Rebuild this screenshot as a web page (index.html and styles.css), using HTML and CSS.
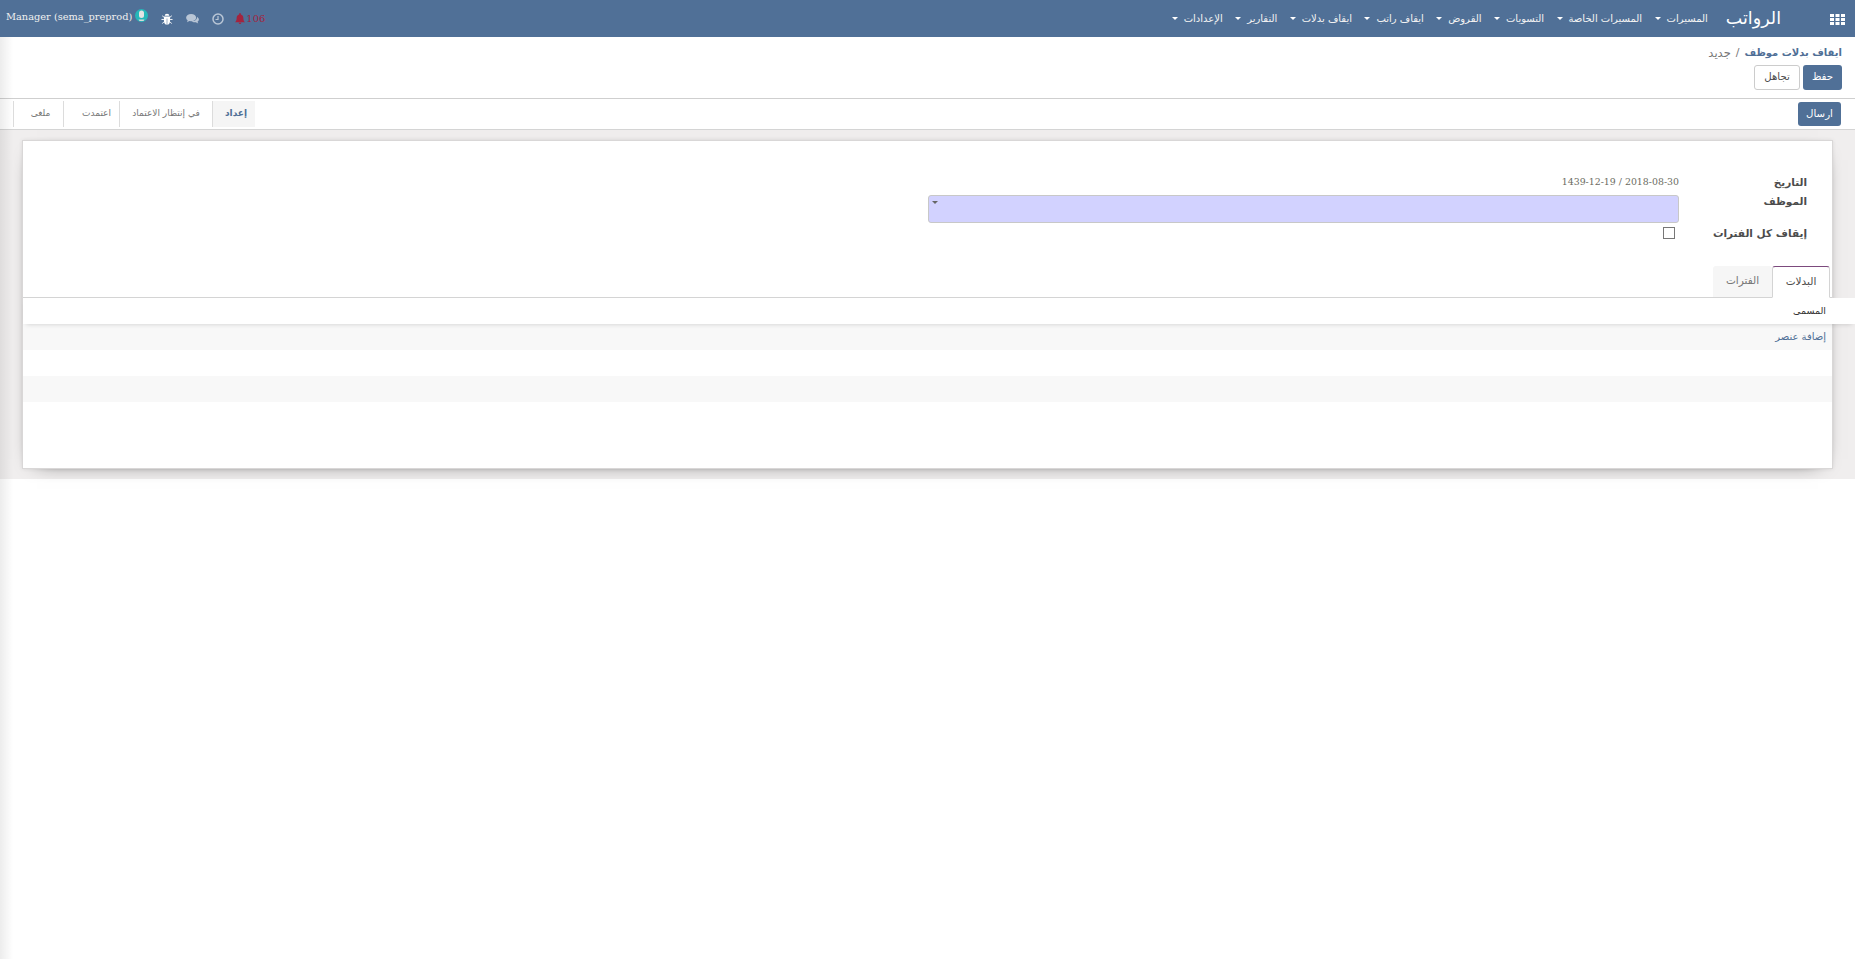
FILE: index.html
```html
<!DOCTYPE html>
<html lang="ar" dir="rtl">
<head>
<meta charset="utf-8">
<title>ايقاف بدلات موظف</title>
<link rel="stylesheet" href="styles.css">
</head>
<body>
<div class="edge-shade"></div>
<header class="navbar">
  <div class="nav-main">
    <svg class="apps" viewBox="0 0 15 11"><g fill="#fff"><rect x="0" y="0" width="4" height="3"/><rect x="5.500" y="0" width="4" height="3"/><rect x="11" y="0" width="4" height="3"/><rect x="0" y="4" width="4" height="3"/><rect x="5.500" y="4" width="4" height="3"/><rect x="11" y="4" width="4" height="3"/><rect x="0" y="8" width="4" height="3"/><rect x="5.500" y="8" width="4" height="3"/><rect x="11" y="8" width="4" height="3"/></g></svg>
    <span class="brand">الرواتب</span>
    <nav class="menu">
      <a class="menu-item">المسيرات<i class="caret"></i></a>
      <a class="menu-item">المسيرات الخاصة<i class="caret"></i></a>
      <a class="menu-item">التسويات<i class="caret"></i></a>
      <a class="menu-item">القروض<i class="caret"></i></a>
      <a class="menu-item">ايقاف راتب<i class="caret"></i></a>
      <a class="menu-item">ايقاف بدلات<i class="caret"></i></a>
      <a class="menu-item">التقارير<i class="caret"></i></a>
      <a class="menu-item">الإعدادات<i class="caret"></i></a>
    </nav>
  </div>
  <div class="nav-tools">
    <span class="alerts">106<svg class="ico-bell" viewBox="0 0 12 13"><path fill="#a3243f" d="M6 0a1 1 0 0 1 1 1v.6c2 .4 3 2 3 4 0 3 .6 4 2 5.400H0c1.400-1.400 2-2.400 2-5.400 0-2 1-3.600 3-4V1a1 1 0 0 1 1-1zM4.500 11.500h3a1.500 1.500 0 0 1-3 0z"/></svg></span>
    <svg class="ico-clock" viewBox="0 0 12 12"><circle cx="6" cy="6" r="5" fill="none" stroke="#b9c6d6" stroke-width="1.500"/><path d="M6 3v3.500H3.500" fill="none" stroke="#b9c6d6" stroke-width="1.200"/></svg>
    <svg class="ico-chat" viewBox="0 0 14 11"><g fill="#b9c6d6"><ellipse cx="5.500" cy="4" rx="5.500" ry="4"/><path d="M2 6l-1 3 4-2z"/><path d="M12 3.200c1.300.7 2 1.700 2 2.800 0 1-.6 1.900-1.500 2.500l.8 2-2.700-1.500c-2 .3-3.700-.2-4.600-1 3.300 0 6.200-2 6-4.800z"/></g></svg>
    <svg class="ico-bug" viewBox="0 0 12 13"><g fill="#fff"><path d="M3.500 3a2.500 2.200 0 0 1 5 0z"/><path d="M2.700 3.700h6.600V9c0 2-1.400 3.600-3 3.800V6H5.700v6.800c-1.600-.2-3-1.800-3-3.800z"/></g><g stroke="#fff" stroke-width="1" fill="none"><path d="M2.700 4.500L.8 3M9.300 4.500L11.200 3M2.700 7H0M9.300 7H12M2.700 9.500L1 11.500M9.300 9.500L11 11.500"/></g></svg>
    <svg class="ico-mic" viewBox="0 0 13 13"><circle cx="6.500" cy="6.500" r="6.500" fill="#26b7b9"/><rect x="4" y="1.500" width="5" height="7.500" rx="2.500" fill="#e4e4e4"/><path d="M3.500 10.500h6l-1 1.500h-4z" fill="#d8d8d8"/></svg>
    <span class="user">Manager (sema_preprod)</span>
  </div>
</header>

<section class="control-panel">
  <div class="breadcrumb"><a class="crumb-link">ايقاف بدلات موظف</a><span class="crumb-sep">/</span><span class="crumb-cur">جديد</span></div>
  <div class="cp-buttons">
    <button class="btn btn-primary btn-save">حفظ</button>
    <button class="btn btn-default">تجاهل</button>
  </div>
</section>

<section class="statusbar">
  <button class="btn btn-primary btn-send">ارسال</button>
  <div class="states">
    <span class="state state-active">إعداد</span>
    <span class="state state-wait">في إنتظار الاعتماد</span>
    <span class="state state-appr">اعتمدت</span>
    <span class="state state-canc">ملغى</span>
  </div>
</section>

<main class="content">
  <div class="sheet">
    <div class="fields">
      <div class="field field-date"><label class="lbl">التاريخ</label><span class="val">2018-08-30 / 1439-12-19</span></div>
      <div class="field field-emp"><label class="lbl">الموظف</label><div class="select"><i class="select-caret"></i></div></div>
      <div class="field field-all"><label class="lbl">إيقاف كل الفترات</label><span class="check"></span></div>
    </div>
    <div class="tabs">
      <a class="tab tab-active">البدلات</a>
      <a class="tab tab-off">الفترات</a>
    </div>
    <div class="thead">المسمى</div>
    <div class="row row-alt"><a class="add-link">إضافة عنصر</a></div>
    <div class="row"></div>
    <div class="row row-alt"></div>
    <div class="row-tail"></div>
  </div>
</main>
</body>
</html>
```
FILE: styles.css
```css
* { box-sizing: border-box; }
html, body { margin: 0; padding: 0; height: 100%; }
body {
  font-family: "DejaVu Serif", "DejaVu Sans", serif;
  font-size: 11px;
  line-height: 1.4;
  color: #4c4c4c;
  background: #fff;
  position: relative;
  overflow: hidden;
}
.edge-shade {
  position: absolute;
  left: 0; top: 37px; bottom: 0;
  width: 13px;
  background: linear-gradient(to right, rgba(0,0,0,.075), rgba(0,0,0,0));
  z-index: 5;
  pointer-events: none;
}
.navbar {
  height: 37px;
  background: #507097;
  color: #fff;
  display: flex;
  justify-content: space-between;
  align-items: center;
}
.nav-main { display: flex; align-items: center; padding-right: 10px; }
.apps { width: 15px; height: 11px; display: block; margin-top: 1px; }
.brand { font-family: "DejaVu Sans", sans-serif; font-size: 17.500px; line-height: 24px; margin-right: 49px; margin-left: 18px; position: relative; top: -1px; }
.menu { display: flex; }
.menu-item { font-family: "DejaVu Sans", sans-serif; font-size: 10px; display: flex; align-items: center; margin-left: 12.400px; color: #f2f2f2; }
.caret { width: 0; height: 0; border-top: 3px solid #fff; border-left: 3px solid transparent; border-right: 3px solid transparent; margin-right: 6px; }
.nav-tools { display: flex; align-items: center; padding-left: 6px; }
.alerts { color: #a3243f; display: flex; align-items: center; font-size: 10px; margin-left: 11px; }
.ico-bell { width: 10px; height: 11px; margin-right: 1px; }
.ico-clock { width: 12px; height: 12px; margin-left: 13px; }
.ico-chat { width: 13px; height: 10px; margin-left: 13px; }
.ico-bug { width: 12px; height: 12px; margin-left: 13px; }
.ico-mic { width: 13px; height: 13px; margin-left: 3px; margin-top: -6px; }
.user { color: #f0f0f0; font-size: 9.800px; margin-top: -3px; }

.control-panel { height: 62px; padding: 7px 13px 0; border-bottom: 1px solid #cfcfcf; }
.breadcrumb { display: flex; align-items: center; height: 18px; font-family: "DejaVu Sans", sans-serif; font-size: 10px; }
.crumb-link { font-weight: bold; color: #4f6f96; }
.crumb-sep { margin: 0 5px; color: #777; font-size: 11px; }
.crumb-cur { color: #777; font-size: 11.500px; }
.cp-buttons { display: flex; gap: 3px; margin-top: 3px; }
.btn { font-family: "DejaVu Sans", sans-serif; font-size: 10.200px; border-radius: 3px; border: 1px solid transparent; height: 25px; padding: 0; line-height: 1; }
.btn-primary { background: #507097; color: #fff; }
.btn-default { background: #fff; border-color: #ccc; color: #4c4c4c; width: 46px; }
.btn-save { width: 39px; }

.statusbar { height: 31px; padding: 3px 14px 0 13px; display: flex; justify-content: space-between; border-bottom: 1px solid #d4d4d4; }
.btn-send { width: 43px; height: 24px; }
.states { display: flex; height: 26px; margin-top: -1px; font-family: "DejaVu Sans", sans-serif; font-size: 9px; }
.state { display: flex; align-items: center; justify-content: center; border-left: 1px solid #dcdcdc; color: #777; padding-bottom: 1px; }
.state-active { width: 43px; background: #f5f5f5; font-weight: bold; color: #4f6f96; padding-left: 4px; }
.state-wait { width: 93px; }
.state-appr { width: 56px; padding-left: 10px; }
.state-canc { width: 50px; padding-left: 4px; }

.content { background: #f0eeee; height: 349px; padding: 10px 22px 10px 22px; }
.sheet { background: #fff; border: 1px solid #d9d7d7; height: 329px; box-shadow: 0 5px 20px -15px #000, 0 0 4px rgba(0,0,0,.08); }
.fields { height: 125px; padding-top: 32px; }
.field { display: flex; }
.lbl { font-family: "DejaVu Sans", sans-serif; font-size: 10.500px; font-weight: bold; color: #4c4c4c; width: 128px; margin-right: 25px; flex: none; }
.field-date { height: 18px; align-items: center; }
.val { font-size: 9.400px; color: #6b6b62; }
.field-emp { height: 34px; }
.field-emp .lbl { line-height: 16px; margin-top: 2px; }
.select { width: 751px; height: 28px; margin-top: 4px; background: #d2d2ff; border: 1px solid #c8c8c8; border-radius: 3px; position: relative; }
.select-caret { position: absolute; left: 3px; top: 5px; width: 0; height: 0; border-top: 3px solid #666; border-left: 3px solid transparent; border-right: 3px solid transparent; }
.field-all { height: 16px; align-items: center; }
.check { width: 12px; height: 12px; border: 1px solid #777; background: #fff; margin-right: 4px; }
.tabs { height: 32px; display: flex; align-items: flex-start; border-bottom: 1px solid #d4d4d4; padding-right: 2px; }
.tab { height: 32px; display: flex; align-items: center; justify-content: center; font-family: "DejaVu Sans", sans-serif; font-size: 10.500px; border-radius: 3px 3px 0 0; padding-bottom: 2px; }
.tab-active { width: 58px; background: #fff; border: 1px solid #d4d4d4; border-top: 1px solid #7c4a7d; border-bottom-color: #fff; color: #4c4c4c; }
.tab-off { width: 59px; height: 31px; background: #f6f6f6; color: #777; padding-bottom: 3px; }
.thead { height: 26px; margin-right: -23px; padding-right: 29px; background: #fff; font-family: "DejaVu Sans", sans-serif; font-size: 9.500px; color: #333; display: flex; align-items: center; position: relative; box-shadow: 0 3px 5px -3px rgba(0,0,0,.18); }
.row { height: 26px; padding-right: 6px; display: flex; align-items: center; font-family: "DejaVu Sans", sans-serif; font-size: 10px; }
.row-alt { background: #f8f8f8; }
.add-link { color: #4f6f96; }
.row-tail { height: 66px; }
```
